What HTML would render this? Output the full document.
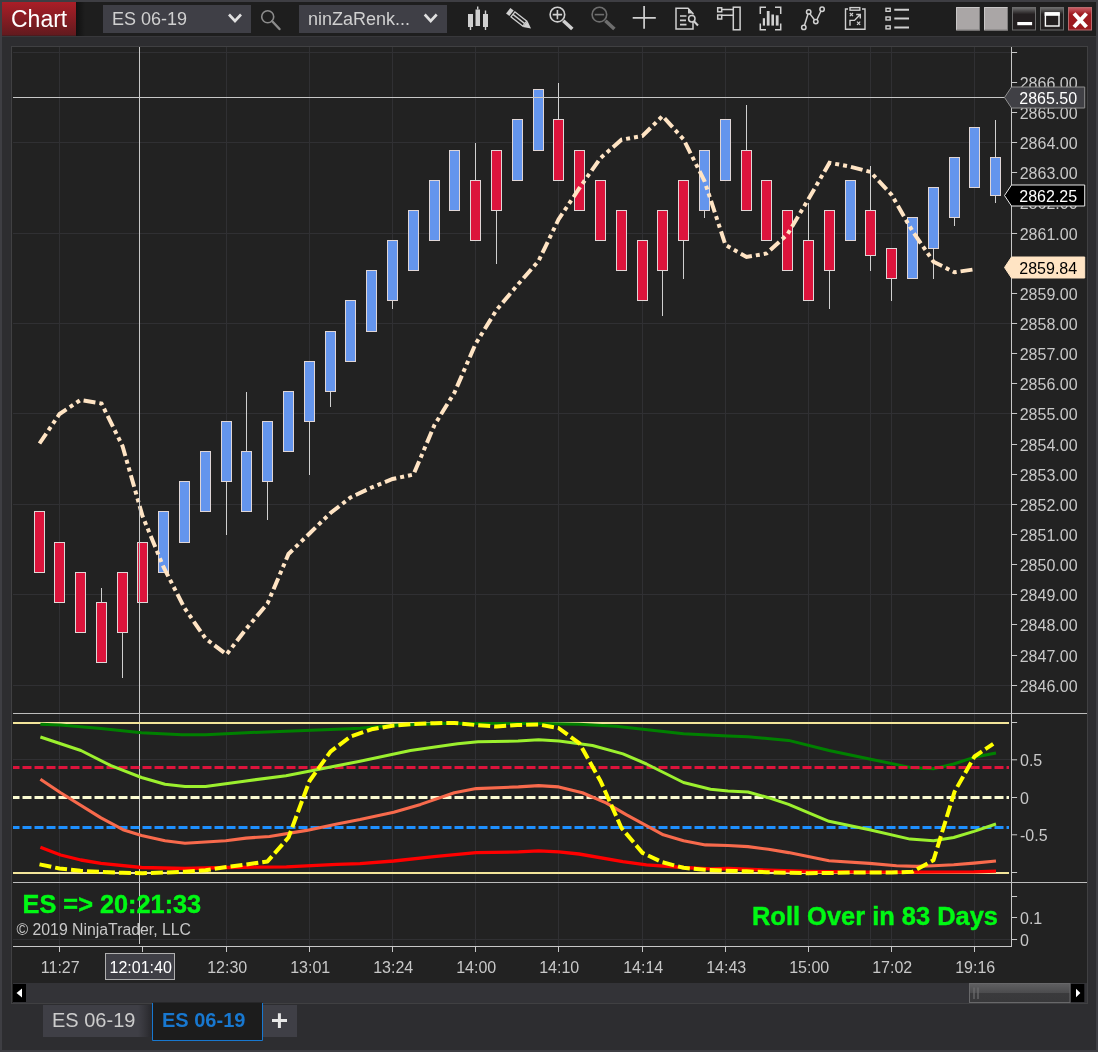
<!DOCTYPE html>
<html lang="en"><head><meta charset="utf-8"><title>Chart - ES 06-19</title>
<style>html,body{margin:0;padding:0;background:#2d2d30;}body{width:1098px;height:1052px;overflow:hidden;}svg{display:block;will-change:transform;}text{font-family:'Liberation Sans', Arial, sans-serif;}</style>
</head><body>
<svg width="1098" height="1052" viewBox="0 0 1098 1052">
<defs>
<linearGradient id="gChart" x1="0" y1="0" x2="0" y2="1"><stop offset="0" stop-color="#aa1e27"/><stop offset="1" stop-color="#611a1e"/></linearGradient>
<linearGradient id="gBtn" x1="0" y1="0" x2="0" y2="1"><stop offset="0" stop-color="#b8b6b6"/><stop offset="1" stop-color="#8f8d8d"/></linearGradient>
<linearGradient id="gBtnD" x1="0" y1="0" x2="0" y2="1"><stop offset="0" stop-color="#707070"/><stop offset="0.3" stop-color="#231f20"/><stop offset="1" stop-color="#231f20"/></linearGradient>
<linearGradient id="gBtnR" x1="0" y1="0" x2="0" y2="1"><stop offset="0" stop-color="#c86068"/><stop offset="0.3" stop-color="#a01a20"/><stop offset="1" stop-color="#9a191e"/></linearGradient>
<linearGradient id="gThumb" x1="0" y1="0" x2="0" y2="1"><stop offset="0" stop-color="#606062"/><stop offset="0.48" stop-color="#4c4c4e"/><stop offset="0.52" stop-color="#3a3a3c"/><stop offset="1" stop-color="#38383a"/></linearGradient>
<linearGradient id="gShadow" x1="0" y1="0" x2="1" y2="0"><stop offset="0" stop-color="#2a2a2e" stop-opacity="0"/><stop offset="1" stop-color="#242428" stop-opacity="0.9"/></linearGradient>
<linearGradient id="gCs" x1="0" y1="0" x2="1" y2="0"><stop offset="0" stop-color="#101010"/><stop offset="1" stop-color="#1e1e1e"/></linearGradient>
</defs>
<rect x="0" y="0" width="1098" height="1052" fill="#2d2d30"/>
<rect x="0" y="0" width="1098" height="2" fill="#3e3e43"/>
<rect x="0" y="0" width="2" height="1052" fill="#3e3e43"/>
<rect x="1096" y="0" width="2" height="1052" fill="#3e3e43"/>
<rect x="0" y="1050" width="1098" height="2" fill="#3e3e43"/>
<rect x="2" y="2" width="1094" height="34" fill="#1e1e1e"/>
<rect x="76" y="2" width="9" height="34" fill="url(#gCs)"/>
<rect x="2" y="36" width="1094" height="1" fill="#38383b"/>
<rect x="2" y="2" width="74" height="33.700" fill="url(#gChart)"/>
<text x="11" y="27" font-size="23" fill="#ffffff">Chart</text>
<rect x="103" y="5" width="148" height="28" fill="#3f3f46"/>
<text x="112" y="25" font-size="18" fill="#d0d0d0">ES 06-19</text>
<path d="M229 14.5 L235 21 L241 14.5" fill="none" stroke="#e0e0e0" stroke-width="2.6"/>
<g fill="none" stroke="#8c8c8c"><circle cx="267.700" cy="16.700" r="6" stroke-width="1.6"/><path d="M272.200 21.200 L279.500 29" stroke-width="2.4" stroke-linecap="round"/></g>
<rect x="299" y="5" width="148" height="28" fill="#3f3f46"/>
<text x="308" y="25" font-size="18" fill="#d0d0d0">ninZaRenk...</text>
<path d="M424.700 14.500 L430.700 21 L436.700 14.500" fill="none" stroke="#e0e0e0" stroke-width="2.6"/>
<g fill="#d0d0d0" stroke="none"><rect x="468" y="14" width="5" height="13"/><rect x="469.800" y="27" width="1.400" height="3"/><rect x="475.500" y="9.500" width="4.500" height="16.500"/><rect x="477" y="6.500" width="1.400" height="3"/><rect x="483" y="14" width="5" height="13"/><rect x="484.800" y="10.500" width="1.400" height="3.500"/><rect x="484.800" y="27" width="1.400" height="3"/></g>
<g transform="translate(509,11.300) rotate(38)" fill="none" stroke="#d0d0d0" stroke-width="1.300"><rect x="-1" y="-3.500" width="4.200" height="7" fill="#d0d0d0" stroke="none"/><rect x="5" y="-3.200" width="15" height="6.400"/><path d="M5 0 H20"/><path d="M20.500 -3.800 L28 0 L20.500 3.800 Z" fill="#d0d0d0" stroke="none"/></g>
<g fill="none" stroke="#d0d0d0"><circle cx="557.400" cy="14.600" r="7.300" stroke-width="1.600"/><path d="M552.700 14.600 H562.100 M557.400 9.900 V19.300" stroke-width="1.600"/><path d="M563.300 20.700 L572.300 29" stroke-width="3.600" stroke-linecap="butt"/></g>
<g fill="none" stroke="#6e6e6e"><circle cx="599.400" cy="14.600" r="7.300" stroke-width="1.600"/><path d="M594.700 14.600 H604.100" stroke-width="1.600"/><path d="M605.400 20.700 L614.400 29" stroke-width="3.600" stroke-linecap="butt"/></g>
<path d="M632.700 17.800 H655.800 M644.100 6 V28.800" stroke="#d0d0d0" stroke-width="1.700" fill="none"/>
<g fill="none" stroke="#d0d0d0" stroke-width="1.500"><path d="M693 22 V29 H676 V8.300 H688 L693 13.500 V14.500"/><path d="M688 8.300 V13.500 H693 Z" fill="#d0d0d0" stroke="none"/><path d="M680 16 H686.500 M680 20.300 H686 M680 24.700 H686.500" stroke-width="1.700"/><circle cx="691.800" cy="18.800" r="3.200"/><path d="M694 21.200 L698 25.500" stroke-width="2"/></g>
<g fill="none" stroke="#d0d0d0" stroke-width="1.500"><rect x="733.300" y="7.200" width="6.800" height="22.600"/><rect x="717.700" y="7.800" width="4" height="4"/><rect x="717.700" y="15" width="4" height="4"/><path d="M721.700 9.500 H733.300 M721.700 15.300 H733.300"/></g>
<g fill="none" stroke="#d0d0d0" stroke-width="1.500"><path d="M766 7.300 H760.300 V14 M760.300 23.500 V29.700 H766 M775 7.300 H780.700 V14 M780.700 23.500 V29.700 H775"/><g fill="#d0d0d0" stroke="none"><rect x="762.800" y="18.200" width="2.200" height="7.400"/><rect x="766.800" y="11" width="2.800" height="14.600"/><rect x="771.400" y="14.500" width="2.600" height="11.100"/><rect x="775.800" y="15.300" width="2.800" height="10.300"/></g></g>
<g fill="none" stroke="#d0d0d0" stroke-width="1.500"><path d="M804.500 25.300 L808 14 M809.800 13.600 L814.600 20 M816.900 19.700 L821 11"/><circle cx="803.800" cy="27.400" r="2.200"/><circle cx="808.700" cy="11.900" r="2.200"/><circle cx="815.800" cy="21.600" r="2.200"/><circle cx="822.100" cy="9.200" r="2.200"/></g>
<g fill="none" stroke="#d0d0d0" stroke-width="1.400"><path d="M848 9 H845.500 V29.300 H865 V9 H862"/><rect x="850" y="7.600" width="9.800" height="2.600"/><path d="M850 25.800 V20.400 H854.500 L860 14.800 M856.200 14.500 H860.300 V18.600"/><path d="M849.800 13 L853 16.200 M853 13 L849.800 16.200 M857 21.700 L860.200 24.900 M860.200 21.700 L857 24.900" stroke-width="1.200"/></g>
<g fill="none" stroke="#d0d0d0"><rect x="886" y="8.300" width="4.200" height="3" stroke-width="1.400"/><rect x="886" y="17" width="4.200" height="3" stroke-width="1.400"/><rect x="886" y="25.900" width="4.200" height="3" stroke-width="1.400"/><path d="M894.300 9.800 H909 M894.300 18.600 H909 M894.300 27.400 H909" stroke-width="2"/></g>
<rect x="956" y="7" width="24" height="23.500" fill="#aaa6a6"/>
<path d="M956.5 30 V7.500 H979.5" fill="none" stroke="#c9c7c7" stroke-width="1"/>
<path d="M956.5 30 H979.5 V7.500" fill="none" stroke="#7f7d7d" stroke-width="1"/>
<rect x="984" y="7" width="24" height="23.500" fill="#aaa6a6"/>
<path d="M984.5 30 V7.500 H1007.5" fill="none" stroke="#c9c7c7" stroke-width="1"/>
<path d="M984.5 30 H1007.5 V7.500" fill="none" stroke="#7f7d7d" stroke-width="1"/>
<rect x="1012.5" y="7.500" width="23" height="22.500" fill="url(#gBtnD)" stroke="#6c6c6c" stroke-width="1"/>
<rect x="1040.5" y="7.500" width="23" height="22.500" fill="url(#gBtnD)" stroke="#6c6c6c" stroke-width="1"/>
<rect x="1017.300" y="22" width="14.800" height="3.200" fill="#ffffff"/>
<rect x="1045.400" y="13" width="13.600" height="13" fill="none" stroke="#ffffff" stroke-width="1.400"/><rect x="1044.700" y="12.200" width="15" height="3.600" fill="#ffffff"/>
<rect x="1068.500" y="7.500" width="23" height="22.500" fill="url(#gBtnR)" stroke="#b86a6e" stroke-width="1"/>
<path d="M1074 13.500 L1086.500 27 M1086.500 13.500 L1074 27" stroke="#ffffff" stroke-width="4" fill="none"/>
<rect x="11.5" y="46.5" width="1076" height="957" fill="#222222" stroke="#404042" stroke-width="1"/>
<path d="M13 52.5 H1011.5" stroke="#303033" stroke-width="1"/>
<path d="M13 142.5 H1011.5" stroke="#303033" stroke-width="1"/>
<path d="M13 233.5 H1011.5" stroke="#303033" stroke-width="1"/>
<path d="M13 323.5 H1011.5" stroke="#303033" stroke-width="1"/>
<path d="M13 413.5 H1011.5" stroke="#303033" stroke-width="1"/>
<path d="M13 504.5 H1011.5" stroke="#303033" stroke-width="1"/>
<path d="M13 594.5 H1011.5" stroke="#303033" stroke-width="1"/>
<path d="M13 685.5 H1011.5" stroke="#303033" stroke-width="1"/>
<path d="M59.5 47 V946" stroke="#303033" stroke-width="1"/>
<path d="M226.5 47 V946" stroke="#303033" stroke-width="1"/>
<path d="M309.5 47 V946" stroke="#303033" stroke-width="1"/>
<path d="M392.5 47 V946" stroke="#303033" stroke-width="1"/>
<path d="M475.5 47 V946" stroke="#303033" stroke-width="1"/>
<path d="M558.5 47 V946" stroke="#303033" stroke-width="1"/>
<path d="M642.5 47 V946" stroke="#303033" stroke-width="1"/>
<path d="M725.5 47 V946" stroke="#303033" stroke-width="1"/>
<path d="M808.5 47 V946" stroke="#303033" stroke-width="1"/>
<path d="M891.5 47 V946" stroke="#303033" stroke-width="1"/>
<path d="M974.5 47 V946" stroke="#303033" stroke-width="1"/>
<path d="M870.500 47 V946" stroke="#303033" stroke-width="1"/>
<path d="M13 759.500 H1012" stroke="#303033" stroke-width="1"/>
<path d="M13 939.500 H1012" stroke="#303033" stroke-width="1"/>
<g id="candles">
<rect x="34.5" y="511.5" width="10" height="61" fill="#dc143c" stroke="#e0d6d6" stroke-width="1"/>
<rect x="54.5" y="542.5" width="10" height="60" fill="#dc143c" stroke="#e0d6d6" stroke-width="1"/>
<rect x="75.5" y="572.5" width="10" height="60" fill="#dc143c" stroke="#e0d6d6" stroke-width="1"/>
<path d="M101.5 588 V602" stroke="#d0d0d0" stroke-width="1"/>
<rect x="96.5" y="602.5" width="10" height="60" fill="#dc143c" stroke="#e0d6d6" stroke-width="1"/>
<path d="M122.5 633 V678" stroke="#d0d0d0" stroke-width="1"/>
<rect x="117.5" y="572.5" width="10" height="60" fill="#dc143c" stroke="#e0d6d6" stroke-width="1"/>
<rect x="137.5" y="542.5" width="10" height="60" fill="#dc143c" stroke="#e0d6d6" stroke-width="1"/>
<rect x="158.5" y="511.5" width="10" height="61" fill="#6495ed" stroke="#e0d6d6" stroke-width="1"/>
<rect x="179.5" y="481.5" width="10" height="61" fill="#6495ed" stroke="#e0d6d6" stroke-width="1"/>
<rect x="200.5" y="451.5" width="10" height="60" fill="#6495ed" stroke="#e0d6d6" stroke-width="1"/>
<path d="M226.5 482 V535" stroke="#d0d0d0" stroke-width="1"/>
<rect x="221.5" y="421.5" width="10" height="60" fill="#6495ed" stroke="#e0d6d6" stroke-width="1"/>
<path d="M246.5 392 V451" stroke="#d0d0d0" stroke-width="1"/>
<rect x="241.5" y="451.5" width="10" height="60" fill="#6495ed" stroke="#e0d6d6" stroke-width="1"/>
<path d="M267.5 482 V520" stroke="#d0d0d0" stroke-width="1"/>
<rect x="262.5" y="421.5" width="10" height="60" fill="#6495ed" stroke="#e0d6d6" stroke-width="1"/>
<rect x="283.5" y="391.5" width="10" height="60" fill="#6495ed" stroke="#e0d6d6" stroke-width="1"/>
<path d="M309.5 422 V475" stroke="#d0d0d0" stroke-width="1"/>
<rect x="304.5" y="361.5" width="10" height="60" fill="#6495ed" stroke="#e0d6d6" stroke-width="1"/>
<path d="M330.5 392 V407" stroke="#d0d0d0" stroke-width="1"/>
<rect x="325.5" y="331.5" width="10" height="60" fill="#6495ed" stroke="#e0d6d6" stroke-width="1"/>
<rect x="345.5" y="300.5" width="10" height="61" fill="#6495ed" stroke="#e0d6d6" stroke-width="1"/>
<rect x="366.5" y="270.5" width="10" height="61" fill="#6495ed" stroke="#e0d6d6" stroke-width="1"/>
<path d="M392.5 301 V309" stroke="#d0d0d0" stroke-width="1"/>
<rect x="387.5" y="240.5" width="10" height="60" fill="#6495ed" stroke="#e0d6d6" stroke-width="1"/>
<rect x="408.5" y="210.5" width="10" height="60" fill="#6495ed" stroke="#e0d6d6" stroke-width="1"/>
<rect x="429.5" y="180.5" width="10" height="60" fill="#6495ed" stroke="#e0d6d6" stroke-width="1"/>
<rect x="449.5" y="150.5" width="10" height="60" fill="#6495ed" stroke="#e0d6d6" stroke-width="1"/>
<path d="M475.5 143 V180" stroke="#d0d0d0" stroke-width="1"/>
<rect x="470.5" y="180.5" width="10" height="60" fill="#dc143c" stroke="#e0d6d6" stroke-width="1"/>
<path d="M496.5 211 V264" stroke="#d0d0d0" stroke-width="1"/>
<rect x="491.5" y="150.5" width="10" height="60" fill="#dc143c" stroke="#e0d6d6" stroke-width="1"/>
<rect x="512.5" y="119.5" width="10" height="61" fill="#6495ed" stroke="#e0d6d6" stroke-width="1"/>
<rect x="533.5" y="89.5" width="10" height="61" fill="#6495ed" stroke="#e0d6d6" stroke-width="1"/>
<path d="M558.5 83 V119" stroke="#d0d0d0" stroke-width="1"/>
<rect x="553.5" y="119.5" width="10" height="61" fill="#dc143c" stroke="#e0d6d6" stroke-width="1"/>
<rect x="574.5" y="150.5" width="10" height="60" fill="#dc143c" stroke="#e0d6d6" stroke-width="1"/>
<rect x="595.5" y="180.5" width="10" height="60" fill="#dc143c" stroke="#e0d6d6" stroke-width="1"/>
<rect x="616.5" y="210.5" width="10" height="60" fill="#dc143c" stroke="#e0d6d6" stroke-width="1"/>
<rect x="637.5" y="240.5" width="10" height="60" fill="#dc143c" stroke="#e0d6d6" stroke-width="1"/>
<path d="M662.5 271 V316" stroke="#d0d0d0" stroke-width="1"/>
<rect x="657.5" y="210.5" width="10" height="60" fill="#dc143c" stroke="#e0d6d6" stroke-width="1"/>
<path d="M683.5 241 V279" stroke="#d0d0d0" stroke-width="1"/>
<rect x="678.5" y="180.5" width="10" height="60" fill="#dc143c" stroke="#e0d6d6" stroke-width="1"/>
<path d="M704.5 211 V218" stroke="#d0d0d0" stroke-width="1"/>
<rect x="699.5" y="150.5" width="10" height="60" fill="#6495ed" stroke="#e0d6d6" stroke-width="1"/>
<rect x="720.5" y="119.5" width="10" height="61" fill="#6495ed" stroke="#e0d6d6" stroke-width="1"/>
<path d="M746.5 105 V150" stroke="#d0d0d0" stroke-width="1"/>
<rect x="741.5" y="150.5" width="10" height="60" fill="#dc143c" stroke="#e0d6d6" stroke-width="1"/>
<rect x="761.5" y="180.5" width="10" height="60" fill="#dc143c" stroke="#e0d6d6" stroke-width="1"/>
<rect x="782.5" y="210.5" width="10" height="60" fill="#dc143c" stroke="#e0d6d6" stroke-width="1"/>
<path d="M808.5 203 V240" stroke="#d0d0d0" stroke-width="1"/>
<rect x="803.5" y="240.5" width="10" height="60" fill="#dc143c" stroke="#e0d6d6" stroke-width="1"/>
<path d="M829.5 271 V309" stroke="#d0d0d0" stroke-width="1"/>
<rect x="824.5" y="210.5" width="10" height="60" fill="#dc143c" stroke="#e0d6d6" stroke-width="1"/>
<rect x="845.5" y="180.5" width="10" height="60" fill="#6495ed" stroke="#e0d6d6" stroke-width="1"/>
<path d="M870.5 166 V210" stroke="#d0d0d0" stroke-width="1"/>
<path d="M870.5 256 V271" stroke="#d0d0d0" stroke-width="1"/>
<rect x="865.5" y="210.5" width="10" height="45" fill="#dc143c" stroke="#e0d6d6" stroke-width="1"/>
<path d="M891.5 279 V301" stroke="#d0d0d0" stroke-width="1"/>
<rect x="886.5" y="248.5" width="10" height="30" fill="#dc143c" stroke="#e0d6d6" stroke-width="1"/>
<rect x="907.5" y="217.5" width="10" height="61" fill="#6495ed" stroke="#e0d6d6" stroke-width="1"/>
<path d="M933.5 249 V279" stroke="#d0d0d0" stroke-width="1"/>
<rect x="928.5" y="187.5" width="10" height="61" fill="#6495ed" stroke="#e0d6d6" stroke-width="1"/>
<path d="M954.5 218 V226" stroke="#d0d0d0" stroke-width="1"/>
<rect x="949.5" y="157.5" width="10" height="60" fill="#6495ed" stroke="#e0d6d6" stroke-width="1"/>
<rect x="969.5" y="127.5" width="10" height="60" fill="#6495ed" stroke="#e0d6d6" stroke-width="1"/>
<path d="M995.5 120 V157" stroke="#d0d0d0" stroke-width="1"/>
<path d="M995.5 196 V203" stroke="#d0d0d0" stroke-width="1"/>
<rect x="990.5" y="157.5" width="10" height="38" fill="#6495ed" stroke="#e0d6d6" stroke-width="1"/>
</g>
<polyline points="39.5,443.5 59.5,414.0 80.5,400.0 101.5,403.5 122.5,446.0 142.5,516.0 163.5,567.0 184.5,608.0 205.5,638.5 226.5,654.5 246.5,628.5 267.5,603.5 288.5,554.0 309.5,533.5 330.5,513.0 350.5,497.5 371.5,487.5 392.5,479.0 413.5,474.5 434.5,425.0 454.5,392.5 475.5,344.0 496.5,310.0 517.5,285.0 538.5,261.0 558.5,219.5 579.5,188.0 600.5,158.0 621.5,139.7 642.5,136.0 662.5,116.0 683.5,139.3 704.5,181.0 725.5,245.0 746.5,257.0 766.5,253.5 787.5,234.3 808.5,199.0 829.5,162.8 850.5,166.7 870.5,172.0 891.5,194.7 912.5,231.2 933.5,261.7 954.5,272.3 974.5,269.3" fill="none" stroke="#ffe4c4" stroke-width="4" stroke-dasharray="12 4 4 4 4 4" stroke-linejoin="miter"/>
<path d="M139.500 47 V944" stroke="#c8c8c8" stroke-width="1"/>
<path d="M13 97.5 H1005" stroke="#c8c8c8" stroke-width="1"/>
<path d="M1011.5 47 V946" stroke="#c8c8c8" stroke-width="1"/>
<path d="M1011.5 52.500 h5.600" stroke="#c8c8c8" stroke-width="1"/>
<path d="M1011.5 82.5 h5.600" stroke="#c8c8c8" stroke-width="1"/>
<text x="1019.700" y="88.6" font-size="16" fill="#c8c8c8">2866.00</text>
<path d="M1011.5 112.5 h5.600" stroke="#c8c8c8" stroke-width="1"/>
<text x="1019.700" y="118.6" font-size="16" fill="#c8c8c8">2865.00</text>
<path d="M1011.5 142.5 h5.600" stroke="#c8c8c8" stroke-width="1"/>
<text x="1019.700" y="148.6" font-size="16" fill="#c8c8c8">2864.00</text>
<path d="M1011.5 172.5 h5.600" stroke="#c8c8c8" stroke-width="1"/>
<text x="1019.700" y="178.6" font-size="16" fill="#c8c8c8">2863.00</text>
<path d="M1011.5 202.5 h5.600" stroke="#c8c8c8" stroke-width="1"/>
<text x="1019.700" y="208.6" font-size="16" fill="#c8c8c8">2862.00</text>
<path d="M1011.5 233.5 h5.600" stroke="#c8c8c8" stroke-width="1"/>
<text x="1019.700" y="239.6" font-size="16" fill="#c8c8c8">2861.00</text>
<path d="M1011.5 263.5 h5.600" stroke="#c8c8c8" stroke-width="1"/>
<text x="1019.700" y="269.6" font-size="16" fill="#c8c8c8">2860.00</text>
<path d="M1011.5 293.5 h5.600" stroke="#c8c8c8" stroke-width="1"/>
<text x="1019.700" y="299.6" font-size="16" fill="#c8c8c8">2859.00</text>
<path d="M1011.5 323.5 h5.600" stroke="#c8c8c8" stroke-width="1"/>
<text x="1019.700" y="329.6" font-size="16" fill="#c8c8c8">2858.00</text>
<path d="M1011.5 353.5 h5.600" stroke="#c8c8c8" stroke-width="1"/>
<text x="1019.700" y="359.6" font-size="16" fill="#c8c8c8">2857.00</text>
<path d="M1011.5 383.5 h5.600" stroke="#c8c8c8" stroke-width="1"/>
<text x="1019.700" y="389.6" font-size="16" fill="#c8c8c8">2856.00</text>
<path d="M1011.5 413.5 h5.600" stroke="#c8c8c8" stroke-width="1"/>
<text x="1019.700" y="419.6" font-size="16" fill="#c8c8c8">2855.00</text>
<path d="M1011.5 444.5 h5.600" stroke="#c8c8c8" stroke-width="1"/>
<text x="1019.700" y="450.6" font-size="16" fill="#c8c8c8">2854.00</text>
<path d="M1011.5 474.5 h5.600" stroke="#c8c8c8" stroke-width="1"/>
<text x="1019.700" y="480.6" font-size="16" fill="#c8c8c8">2853.00</text>
<path d="M1011.5 504.5 h5.600" stroke="#c8c8c8" stroke-width="1"/>
<text x="1019.700" y="510.6" font-size="16" fill="#c8c8c8">2852.00</text>
<path d="M1011.5 534.5 h5.600" stroke="#c8c8c8" stroke-width="1"/>
<text x="1019.700" y="540.6" font-size="16" fill="#c8c8c8">2851.00</text>
<path d="M1011.5 564.5 h5.600" stroke="#c8c8c8" stroke-width="1"/>
<text x="1019.700" y="570.6" font-size="16" fill="#c8c8c8">2850.00</text>
<path d="M1011.5 594.5 h5.600" stroke="#c8c8c8" stroke-width="1"/>
<text x="1019.700" y="600.6" font-size="16" fill="#c8c8c8">2849.00</text>
<path d="M1011.5 624.5 h5.600" stroke="#c8c8c8" stroke-width="1"/>
<text x="1019.700" y="630.6" font-size="16" fill="#c8c8c8">2848.00</text>
<path d="M1011.5 655.5 h5.600" stroke="#c8c8c8" stroke-width="1"/>
<text x="1019.700" y="661.6" font-size="16" fill="#c8c8c8">2847.00</text>
<path d="M1011.5 685.5 h5.600" stroke="#c8c8c8" stroke-width="1"/>
<text x="1019.700" y="691.6" font-size="16" fill="#c8c8c8">2846.00</text>
<path d="M1011.5 722.5 h5.600" stroke="#c8c8c8" stroke-width="1"/>
<path d="M1011.5 759.8 h5.600" stroke="#c8c8c8" stroke-width="1"/>
<text x="1020" y="765.8" font-size="16" fill="#c8c8c8">0.5</text>
<path d="M1011.5 797.5 h5.600" stroke="#c8c8c8" stroke-width="1"/>
<text x="1020" y="803.5" font-size="16" fill="#c8c8c8">0</text>
<path d="M1011.5 834.8 h5.600" stroke="#c8c8c8" stroke-width="1"/>
<text x="1020" y="840.8" font-size="16" fill="#c8c8c8">-0.5</text>
<path d="M1011.5 872.5 h5.600" stroke="#c8c8c8" stroke-width="1"/>
<path d="M1011.5 896.5 h5.600" stroke="#c8c8c8" stroke-width="1"/>
<path d="M1011.5 917.5 h5.600" stroke="#c8c8c8" stroke-width="1"/>
<text x="1020" y="923.5" font-size="16" fill="#c8c8c8">0.1</text>
<path d="M1011.5 939.5 h5.600" stroke="#c8c8c8" stroke-width="1"/>
<text x="1020" y="945.5" font-size="16" fill="#c8c8c8">0</text>
<path d="M1004.500 97.5 L1011.500 87.0 H1084.700 V108.0 H1011.500 Z" fill="#404045" stroke="#8d8d8d" stroke-width="1"/>
<text x="1019.300" y="103.5" font-size="16" fill="#ffffff">2865.50</text>
<path d="M1004.500 195.5 L1011.500 185.0 H1084.700 V206.0 H1011.500 Z" fill="#000000" stroke="#e8e8e8" stroke-width="1"/>
<text x="1019.300" y="201.5" font-size="16" fill="#ffffff">2862.25</text>
<path d="M1004.500 267.5 L1011.500 257.0 H1084.700 V278.0 H1011.500 Z" fill="#ffe4c4" stroke="#ffe4c4" stroke-width="1"/>
<text x="1019.300" y="273.5" font-size="16" fill="#000000">2859.84</text>
<path d="M13 713.500 H1087" stroke="#bdbdbd" stroke-width="1"/>
<path d="M13 882.500 H1087" stroke="#bdbdbd" stroke-width="1"/>
<path d="M13 723 H1009" stroke="#f3e59a" stroke-width="2"/>
<path d="M13 873 H1009" stroke="#f3e59a" stroke-width="2"/>
<polyline points="40.4,724.3 60.6,725.0 101.0,728.6 141.5,732.7 182.0,734.7 205.5,734.7 246.0,732.7 286.0,731.3 337.0,729.3 360.0,728.3 393.7,725.3 444.0,723.6 542.0,723.6 579.0,724.3 616.0,726.3 643.0,729.3 683.5,733.7 728.0,736.0 748.0,736.7 788.6,740.4 829.0,750.5 869.5,759.0 910.0,767.4 933.5,768.7 953.7,764.0 974.0,757.3 996.0,753.0" fill="none" stroke="#008000" stroke-width="3" stroke-linejoin="round" />
<path d="M13 767.500 H1009" stroke="#dc143c" stroke-width="3" stroke-dasharray="9 3" stroke-dashoffset="2.500"/>
<path d="M13 797.500 H1009" stroke="#fafad2" stroke-width="3" stroke-dasharray="9 3" stroke-dashoffset="2.500"/>
<path d="M13 827.500 H1009" stroke="#1e90ff" stroke-width="3" stroke-dasharray="9 3" stroke-dashoffset="2.500"/>
<polyline points="40.4,737.0 80.9,750.5 111.0,765.7 141.5,777.5 165.0,784.2 185.0,786.6 205.5,786.6 246.0,780.9 286.0,775.8 337.0,765.7 360.0,761.3 410.5,750.5 457.7,743.8 478.0,741.8 518.0,741.0 538.6,739.8 559.0,741.0 592.5,745.5 623.0,753.9 646.5,764.0 683.5,782.5 710.5,789.3 728.0,791.0 748.0,792.0 768.4,797.7 788.6,804.4 829.0,821.3 869.5,829.7 910.0,839.1 933.5,840.8 953.7,837.5 974.0,831.4 996.0,824.0" fill="none" stroke="#9cf02e" stroke-width="3" stroke-linejoin="round" />
<polyline points="40.4,779.2 60.6,792.7 101.0,817.9 123.0,829.7 141.5,835.4 165.0,840.8 185.0,843.2 225.7,840.8 246.0,838.1 269.5,836.5 306.6,830.4 337.0,824.0 360.0,819.6 393.7,812.2 420.6,804.4 454.3,792.7 476.2,788.6 518.4,786.9 538.6,785.6 558.8,786.9 582.4,792.7 606.0,802.8 626.2,814.6 663.3,834.8 683.5,840.8 705.4,844.9 728.0,845.5 748.0,846.6 768.4,849.3 788.6,852.6 829.0,860.7 869.5,863.4 896.5,865.8 916.7,866.4 933.5,865.8 953.7,864.8 974.0,863.1 996.0,861.0" fill="none" stroke="#f86a4c" stroke-width="3.1" stroke-linejoin="round" />
<polyline points="40.4,847.2 60.6,855.0 80.9,860.0 101.0,863.4 141.5,867.5 185.0,868.5 225.7,867.5 286.4,866.8 337.0,864.4 360.0,863.7 393.7,861.0 434.0,856.7 476.2,852.6 518.4,851.9 538.6,850.9 558.8,851.9 579.0,854.0 622.8,861.7 646.4,864.8 683.5,867.5 710.4,868.8 728.0,868.5 768.4,870.2 808.9,871.5 869.5,872.2 916.7,872.2 974.0,871.9 996.0,871.2" fill="none" stroke="#ff0000" stroke-width="3.3" stroke-linejoin="round" />
<polyline points="39.5,864.4 59.5,868.5 80.5,870.8 101.5,872.0 122.5,872.8 142.5,873.2 163.5,872.6 184.5,871.8 205.5,870.2 226.5,867.0 246.5,864.5 267.5,861.4 288.5,837.5 309.5,781.0 330.5,751.6 350.5,736.5 371.5,729.3 392.5,725.7 413.5,724.0 434.5,723.2 454.5,723.0 475.5,725.0 496.5,726.6 517.5,725.0 538.5,724.5 558.5,728.0 579.5,743.4 600.5,781.0 621.5,828.0 642.5,852.9 662.5,862.3 683.5,867.8 704.5,869.8 725.5,870.7 746.5,871.3 766.5,872.2 787.5,872.8 808.5,873.2 829.5,873.0 850.5,872.5 870.5,872.5 891.5,872.6 912.5,871.7 933.5,860.2 954.5,791.8 974.5,756.5 993.2,743.8" fill="none" stroke="#ffff00" stroke-width="4" stroke-linejoin="round" stroke-dasharray="12 4"/>
<text x="22.600" y="913" font-size="25" font-weight="bold" fill="#00f814" stroke="#00f814" stroke-width="0.45" textLength="178.600" lengthAdjust="spacingAndGlyphs">ES =&gt; 20:21:33</text>
<text x="752" y="924.500" font-size="25" font-weight="bold" fill="#00f814" stroke="#00f814" stroke-width="0.45" textLength="246" lengthAdjust="spacingAndGlyphs">Roll Over in 83 Days</text>
<text x="16.500" y="934.500" font-size="16" fill="#c8c8c8" textLength="174.500" lengthAdjust="spacingAndGlyphs">© 2019 NinjaTrader, LLC</text>
<path d="M13 946.500 H1012" stroke="#c8c8c8" stroke-width="1"/>
<path d="M59.5 946 v6" stroke="#c8c8c8" stroke-width="1"/>
<text x="60.2" y="973" font-size="16" fill="#c8c8c8" text-anchor="middle">11:27</text>
<path d="M226.5 946 v6" stroke="#c8c8c8" stroke-width="1"/>
<text x="227.2" y="973" font-size="16" fill="#c8c8c8" text-anchor="middle">12:30</text>
<path d="M309.5 946 v6" stroke="#c8c8c8" stroke-width="1"/>
<text x="310.2" y="973" font-size="16" fill="#c8c8c8" text-anchor="middle">13:01</text>
<path d="M392.5 946 v6" stroke="#c8c8c8" stroke-width="1"/>
<text x="393.2" y="973" font-size="16" fill="#c8c8c8" text-anchor="middle">13:24</text>
<path d="M475.5 946 v6" stroke="#c8c8c8" stroke-width="1"/>
<text x="476.2" y="973" font-size="16" fill="#c8c8c8" text-anchor="middle">14:00</text>
<path d="M558.5 946 v6" stroke="#c8c8c8" stroke-width="1"/>
<text x="559.2" y="973" font-size="16" fill="#c8c8c8" text-anchor="middle">14:10</text>
<path d="M642.5 946 v6" stroke="#c8c8c8" stroke-width="1"/>
<text x="643.2" y="973" font-size="16" fill="#c8c8c8" text-anchor="middle">14:14</text>
<path d="M725.5 946 v6" stroke="#c8c8c8" stroke-width="1"/>
<text x="726.2" y="973" font-size="16" fill="#c8c8c8" text-anchor="middle">14:43</text>
<path d="M808.5 946 v6" stroke="#c8c8c8" stroke-width="1"/>
<text x="809.2" y="973" font-size="16" fill="#c8c8c8" text-anchor="middle">15:00</text>
<path d="M891.5 946 v6" stroke="#c8c8c8" stroke-width="1"/>
<text x="892.2" y="973" font-size="16" fill="#c8c8c8" text-anchor="middle">17:02</text>
<path d="M974.5 946 v6" stroke="#c8c8c8" stroke-width="1"/>
<text x="975.2" y="973" font-size="16" fill="#c8c8c8" text-anchor="middle">19:16</text>
<path d="M142.500 946 v6" stroke="#c8c8c8" stroke-width="1"/>
<rect x="105.500" y="953.500" width="69" height="26" fill="#3f3f46" stroke="#b0b0b0" stroke-width="1"/>
<text x="140.700" y="973" font-size="16" fill="#ffffff" text-anchor="middle">12:01:40</text>
<rect x="13" y="983" width="1074" height="20" fill="#333337"/>
<rect x="13" y="984" width="13" height="18" fill="#000000"/>
<path d="M16.500 993 L22 988.500 V997.500 Z" fill="#ffffff"/>
<rect x="1070.700" y="984" width="13.600" height="18" fill="#000000"/>
<path d="M1080.400 993 L1076 988.800 V997.200 Z" fill="#ffffff"/>
<rect x="969.500" y="983.500" width="100.500" height="19" fill="url(#gThumb)" stroke="#68686a" stroke-width="1"/>
<path d="M974 987.500 v11.500 M978 987.500 v11.500" stroke="#6e6e70" stroke-width="1.200"/>
<rect x="43" y="1005" width="109" height="32" fill="#3f3f46"/>
<text x="52" y="1027" font-size="20" fill="#cccccc">ES 06-19</text>
<rect x="138" y="1005" width="14" height="32" fill="url(#gShadow)"/>
<rect x="152.500" y="1002.500" width="110" height="38" fill="#1c1c1c"/>
<path d="M152.500 1003 V1040.500 H262.500 V1003" fill="none" stroke="#1878d0" stroke-width="1"/>
<text x="162" y="1027" font-size="20" font-weight="bold" fill="#1878d0">ES 06-19</text>
<rect x="263" y="1005" width="34" height="32" fill="#3f3f46"/>
<path d="M272 1020.600 H287 M279.400 1013.200 V1028" stroke="#e8e8e8" stroke-width="3"/>
</svg>
</body></html>
